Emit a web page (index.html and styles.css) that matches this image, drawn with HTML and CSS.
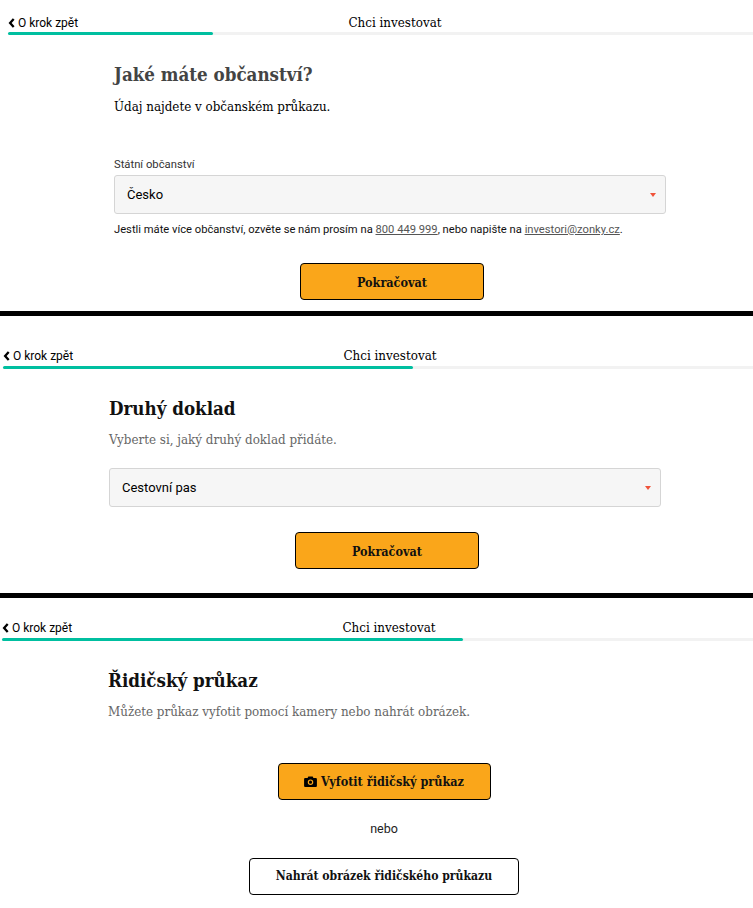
FILE: index.html
```html
<!DOCTYPE html>
<html lang="en">
<head>
  <meta charset="UTF-8">
  <meta name="viewport" content="width=device-width, initial-scale=1.0">
  <title>Chci investovat</title>
  <link rel="stylesheet" href="styles.css">
</head>
<body>
  <!-- Krok 1 -->
  <section class="screen screen-first">
    <header class="topbar">
      <a class="back-link" href="#">
        <svg class="back-icon" viewBox="0 0 6 10"><path d="M5.200 1 1.600 5l3.600 4" fill="none" stroke="#000" stroke-width="2.300"/></svg>
        O krok zpět
      </a>
      <span class="topbar-title">Chci investovat</span>
    </header>
    <div class="progress"><div class="progress-fill fill-first"></div></div>
    <div class="content">
      <h2 class="title title-soft">Jaké máte občanství?</h2>
      <p class="lead lead-dark">Údaj najdete v občanském průkazu.</p>
      <label class="field-label">Státní občanství</label>
      <div class="select">Česko</div>
      <p class="hint">Jestli máte více občanství, ozvěte se nám prosím na <a href="#">800 449 999</a>, nebo napište na <a href="#">investori@zonky.cz</a>.</p>
      <div class="actions"><button class="btn btn-primary btn-next">Pokračovat</button></div>
    </div>
  </section>
  <div class="divider"></div>

  <!-- Krok 2 -->
  <section class="screen screen-second">
    <header class="topbar">
      <a class="back-link" href="#">
        <svg class="back-icon" viewBox="0 0 6 10"><path d="M5.200 1 1.600 5l3.600 4" fill="none" stroke="#000" stroke-width="2.300"/></svg>
        O krok zpět
      </a>
      <span class="topbar-title">Chci investovat</span>
    </header>
    <div class="progress"><div class="progress-fill fill-second"></div></div>
    <div class="content">
      <h2 class="title">Druhý doklad</h2>
      <p class="lead">Vyberte si, jaký druhý doklad přidáte.</p>
      <div class="select select-spaced">Cestovní pas</div>
      <div class="actions"><button class="btn btn-primary btn-next">Pokračovat</button></div>
    </div>
  </section>
  <div class="divider"></div>

  <!-- Krok 3 -->
  <section class="screen screen-third">
    <header class="topbar">
      <a class="back-link" href="#">
        <svg class="back-icon" viewBox="0 0 6 10"><path d="M5.200 1 1.600 5l3.600 4" fill="none" stroke="#000" stroke-width="2.300"/></svg>
        O krok zpět
      </a>
      <span class="topbar-title">Chci investovat</span>
    </header>
    <div class="progress"><div class="progress-fill fill-third"></div></div>
    <div class="content">
      <h2 class="title">Řidičský průkaz</h2>
      <p class="lead">Můžete průkaz vyfotit pomocí kamery nebo nahrát obrázek.</p>
      <div class="upload">
        <button class="btn btn-primary btn-photo">
          <svg class="camera-icon" viewBox="0 0 14 12"><path fill-rule="evenodd" d="M4.600.6h4.800l.8 1.600h2.400c.8 0 1.400.6 1.400 1.300v7c0 .8-.6 1.400-1.400 1.400H1.400C.6 11.900 0 11.300 0 10.500v-7c0-.7.6-1.300 1.400-1.300h2.400zM7 3.700a3 3 0 1 0 0 6 3 3 0 0 0 0-6zm0 1.300a1.700 1.700 0 1 1 0 3.400 1.700 1.700 0 0 1 0-3.400z"/></svg>
          Vyfotit řidičský průkaz
        </button>
        <span class="or">nebo</span>
        <button class="btn btn-outline">Nahrát obrázek řidičského průkazu</button>
      </div>
    </div>
  </section>
</body>
</html>
```

FILE: styles.css
```css
html, body {
  margin: 0;
  padding: 0;
  overflow: hidden;
}
body {
  font-family: Roboto, Arial, sans-serif;
  color: #000;
  background-color: #fff;
}
.screen {
  width: 774px;
}
.screen-first {
  height: 311px;
  margin-left: 8px;
}
.screen-second {
  height: 277px;
  margin-left: 3px;
}
.screen-third {
  height: 310px;
  margin-left: 2px;
}
.divider {
  height: 5px;
  background-color: #000;
}
.topbar {
  display: flex;
  justify-content: center;
  align-items: center;
  position: relative;
  box-sizing: border-box;
  font-family: "DejaVu Serif Condensed", "DejaVu Serif", serif;
}
.screen-first .topbar {
  height: 32px;
  padding-top: 13px;
}
.screen-second .topbar {
  height: 50px;
  padding-top: 30px;
}
.screen-third .topbar {
  height: 40px;
  padding-top: 20px;
}
.back-link {
  position: absolute;
  left: 0;
  bottom: 2px;
  display: flex;
  align-items: center;
  gap: 3px;
  font-family: Roboto, Arial, sans-serif;
  font-size: 12px;
  line-height: 14px;
  color: #000;
  text-decoration: none;
}
.screen-second .back-link,
.screen-third .back-link {
  bottom: 3px;
}
.back-icon {
  width: 7px;
  height: 10px;
}
.topbar-title {
  font-size: 13.25px;
  line-height: 16px;
}
.progress {
  height: 3px;
  background-color: #f2f2f2;
  border-radius: 2px;
}
.progress-fill {
  height: 3px;
  background-color: #00bfa0;
  border-radius: 2px;
}
.fill-first { width: 205px; }
.fill-second { width: 410px; }
.fill-third { width: 461px; }
.content {
  width: 552px;
  margin-left: 106px;
}
.title {
  margin: 0;
  padding-top: 27px;
  font-family: "DejaVu Serif Condensed", "DejaVu Serif", serif;
  font-size: 18.6px;
  font-weight: 700;
  line-height: 26px;
  color: #111;
}
.title-soft {
  color: #444;
}
.lead {
  margin: 8px 0 0;
  font-family: "DejaVu Serif Condensed", "DejaVu Serif", serif;
  font-size: 13.25px;
  line-height: 20px;
  color: #666;
}
.lead-dark {
  margin-top: 9px;
  color: #000;
}
.field-label {
  display: block;
  margin-top: 41px;
  font-size: 11.25px;
  line-height: 14px;
  color: #333;
}
.select {
  position: relative;
  box-sizing: border-box;
  height: 39px;
  margin-top: 3px;
  padding-left: 12px;
  background-color: #f6f6f6;
  border: 1px solid #d5d5d5;
  border-radius: 3px;
  font-size: 13px;
  line-height: 37px;
}
.select::after {
  content: "";
  position: absolute;
  right: 9px;
  top: 17px;
  border-left: 3px solid transparent;
  border-right: 3px solid transparent;
  border-top: 4px solid #f0533a;
}
.select-spaced {
  margin-top: 18px;
}
.hint {
  margin: 8px 0 0;
  font-size: 11.2px;
  line-height: 16px;
  color: #111;
}
.hint a {
  color: #555;
}
.actions {
  display: flex;
  justify-content: center;
  margin-top: 25px;
  padding-left: 4px;
}
.btn {
  box-sizing: border-box;
  height: 37px;
  padding-top: 2px;
  border: 1px solid #000;
  border-radius: 4px;
  font-family: "DejaVu Serif Condensed", "DejaVu Serif", serif;
  font-size: 12.5px;
  font-weight: 700;
  color: #111;
}
.btn-primary {
  background-color: #faa61a;
}
.btn-next {
  width: 184px;
}
.btn-photo {
  display: flex;
  align-items: center;
  justify-content: center;
  gap: 4px;
  width: 213px;
  padding-top: 0;
}
.btn-outline {
  width: 270px;
  padding-top: 0;
  background-color: #fff;
  font-size: 12.1px;
}
.camera-icon {
  width: 13px;
  height: 11px;
}
.upload {
  display: flex;
  flex-direction: column;
  align-items: center;
  margin-top: 41px;
}
.or {
  margin: 21px 0;
  font-size: 12.5px;
  line-height: 16px;
  color: #222;
}
```
